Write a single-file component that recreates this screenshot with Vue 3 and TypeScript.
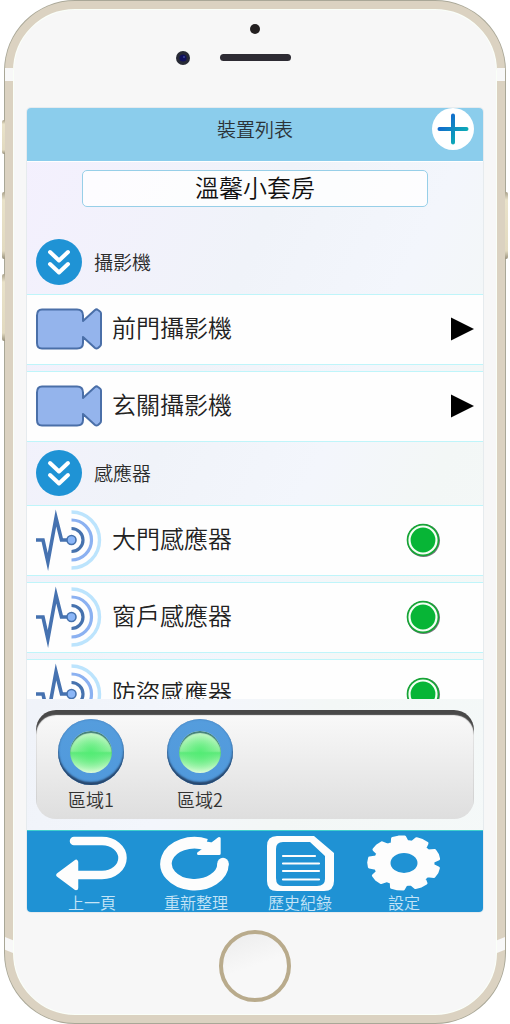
<script setup lang="ts">
import { ref } from 'vue'

interface Item {
  id: string
  name: string
}

const homeName = ref('溫馨小套房')
const camerasOpen = ref(true)
const sensorsOpen = ref(true)

const cameras: Item[] = [
  { id: 'front', name: '前門攝影機' },
  { id: 'hall', name: '玄關攝影機' },
]
const sensors: Item[] = [
  { id: 'door', name: '大門感應器' },
  { id: 'window', name: '窗戶感應器' },
  { id: 'burglar', name: '防盜感應器' },
]
const zones = ref([
  { id: 1, name: '區域1', on: true },
  { id: 2, name: '區域2', on: true },
])

// Outline of a nine-toothed gear on an ellipse
function gearPath(cx: number, cy: number, rx: number, ry: number): string {
  const teeth = 9
  const profile: [number, number][] = [
    [-15, 0.83],
    [-10, 1],
    [0, 1.01],
    [10, 1],
    [15, 0.83],
  ]
  const points: string[] = []
  for (let i = 0; i < teeth; i++) {
    for (const [offset, r] of profile) {
      const a = ((-99 + i * 40 + offset) * Math.PI) / 180
      points.push(`${(cx + rx * r * Math.cos(a)).toFixed(1)} ${(cy + ry * r * Math.sin(a)).toFixed(1)}`)
    }
  }
  return `M${points.join('L')}Z`
}
const gear = gearPath(37, 28, 35, 26)
</script>

<template>
  <div class="page">
    <div class="phone">
      <span class="side mute"></span>
      <span class="side up"></span>
      <span class="side down"></span>
      <span class="side power"></span>
      <span class="band top-left"></span>
      <span class="band top-right"></span>
      <span class="band bottom-left"></span>
      <span class="band bottom-right"></span>

      <div class="bezel">
        <svg width="160" height="99" viewBox="0 0 160 99" aria-hidden="true">
          <circle cx="80" cy="20" r="5" fill="#231f20" />
          <circle cx="8" cy="49" r="7" fill="#272a35" />
          <circle cx="8" cy="49" r="3.6" fill="#10105c" />
          <circle cx="9" cy="48" r="1" fill="#3b4a9a" />
          <rect x="45" y="45" width="71" height="7" rx="3.5" fill="#2d2b33" />
        </svg>
      </div>

      <main class="screen">
        <header class="bar">
          <h1>裝置列表</h1>
          <button class="add" type="button" aria-label="新增裝置">
            <svg width="42" height="42" viewBox="0 0 42 42">
              <defs>
                <linearGradient id="plus" gradientUnits="userSpaceOnUse" x1="8" y1="10" x2="34" y2="32">
                  <stop offset="0.1" stop-color="#1263cf" />
                  <stop offset="0.9" stop-color="#0cb2b4" />
                </linearGradient>
              </defs>
              <path d="M21 7.500V34.500M7.500 21H34.500" stroke="url(#plus)" stroke-width="4" stroke-linecap="round" />
            </svg>
          </button>
        </header>

        <div class="name">
          <input v-model="homeName" type="text" aria-label="名稱" />
        </div>

        <div class="list">
          <section>
            <div class="head">
              <button class="fold" type="button" aria-labelledby="cam-title" :aria-expanded="camerasOpen" @click="camerasOpen = !camerasOpen">
                <svg width="46" height="46" viewBox="0 0 46 46">
                  <path d="M14 13L23 21.500L32 13M14 25L23 33.500L32 25" />
                </svg>
              </button>
              <h2 id="cam-title">攝影機</h2>
            </div>
            <ul v-if="camerasOpen">
              <li v-for="c in cameras" :key="c.id">
                <svg width="66" height="42" viewBox="0 0 66 42" fill="#94b4ec" stroke="#4a6fa8" stroke-width="2" stroke-linejoin="round" aria-hidden="true">
                  <path d="M6 1.500H41Q47 1.500 47 7.500V13L59 2Q60.500 0.800 62 2L64 3.500Q65 4.200 65 5.500V36Q65 37.500 64 38.200L62 40Q60.500 41 59 40L47 29V35Q47 40.500 41 40.500H6Q1 40.500 1 35V7.500Q1 1.500 6 1.500Z" />
                </svg>
                <span class="label">{{ c.name }}</span>
                <button class="play" type="button" :aria-label="c.name">
                  <svg width="23" height="24" viewBox="0 0 23 24"><path d="M0 0.500L23 12L0 23.500Z" /></svg>
                </button>
              </li>
            </ul>
          </section>

          <section>
            <div class="head">
              <button class="fold" type="button" aria-labelledby="sen-title" :aria-expanded="sensorsOpen" @click="sensorsOpen = !sensorsOpen">
                <svg width="46" height="46" viewBox="0 0 46 46">
                  <path d="M14 13L23 21.500L32 13M14 25L23 33.500L32 25" />
                </svg>
              </button>
              <h2 id="sen-title">感應器</h2>
            </div>
            <ul v-if="sensorsOpen">
              <li v-for="s in sensors" :key="s.id">
                <svg width="66" height="62" viewBox="0 0 66 62" fill="none" aria-hidden="true">
                  <path d="M35.500 3A28 28 0 0 1 35.500 59" stroke="#bce4fd" stroke-width="3.400" />
                  <path d="M35.500 11A20 20 0 0 1 35.500 51" stroke="#8bb1f1" stroke-width="3.200" />
                  <path d="M35.500 19.500A11.500 11.500 0 0 1 35.500 42.500" stroke="#4672ae" stroke-width="3.200" />
                  <path d="M0 31H7L11.900 53L20 9L25.500 31H31" stroke="#4672b0" stroke-width="3.600" stroke-miterlimit="10" />
                  <circle cx="35.500" cy="31" r="4.500" fill="#8bb6f7" stroke="#4672ae" stroke-width="1.600" />
                </svg>
                <span class="label">{{ s.name }}</span>
                <svg class="status" width="36" height="36" viewBox="0 0 36 36" role="img" aria-label="正常">
                  <circle cx="18.500" cy="18.500" r="16.500" fill="#7f7484" />
                  <circle cx="18" cy="18" r="16.300" fill="#16a536" />
                  <circle cx="18" cy="18" r="13.500" fill="#07b536" stroke="#f4fff4" stroke-width="2.200" />
                </svg>
              </li>
            </ul>
          </section>
        </div>

        <div class="zones">
          <div class="panel">
            <div v-for="z in zones" :key="z.id" class="zone">
              <button type="button" :aria-labelledby="'zone' + z.id" :aria-pressed="z.on" @click="z.on = !z.on">
                <span class="lamp" :class="{ off: !z.on }"></span>
              </button>
              <span :id="'zone' + z.id">{{ z.name }}</span>
            </div>
          </div>
        </div>

        <nav class="tabs">
          <button type="button">
            <svg width="72" height="57" viewBox="0 0 72 57">
              <path d="M18 6H46A20.500 17 0 0 1 46 40H20" fill="none" stroke="#fdfdfd" stroke-width="8.500" stroke-linecap="round" />
              <path d="M2.500 40L20 27V53Z" fill="#fdfdfd" stroke="#fdfdfd" stroke-width="4.500" stroke-linejoin="round" />
            </svg>
            <span>上一頁</span>
          </button>
          <button type="button">
            <svg width="72" height="57" viewBox="0 0 72 57">
              <path d="M63 28.500A28.500 21 0 1 1 46 9.500" fill="none" stroke="#fdfdfd" stroke-width="11.500" />
              <circle cx="63" cy="28.500" r="5.700" fill="#fdfdfd" />
              <path d="M59.200 3.500V18.500H38.500L46 13V8L52 9Z" fill="#fdfdfd" stroke="#fdfdfd" stroke-width="3" stroke-linejoin="round" />
            </svg>
            <span>重新整理</span>
          </button>
          <button type="button">
            <svg width="68" height="57" viewBox="0 0 68 57">
              <path fill="#fdfdfd" fill-rule="evenodd" d="M11 1H48L68 18V46Q68 56 58 56H11Q1 56 1 46V11Q1 1 11 1ZM17 7Q10 7 10 14V43Q10 51 17 51H51Q59 51 59 44V21L44 7Z" />
              <path d="M17 21H49M17 28.500H53M17 36H53M17 44.500H53" stroke="#fdfdfd" stroke-width="2.200" stroke-linecap="round" />
            </svg>
            <span>歷史紀錄</span>
          </button>
          <button type="button">
            <svg width="74" height="57" viewBox="0 0 74 57">
              <path :d="gear" fill="#fdfdfd" stroke="#fdfdfd" stroke-width="3" stroke-linejoin="round" />
              <ellipse cx="37" cy="28" rx="13.500" ry="10" fill="#1f92d4" />
            </svg>
            <span>設定</span>
          </button>
        </nav>
      </main>

      <div class="chin">
        <button class="home" type="button" aria-label="主畫面"></button>
      </div>
    </div>
  </div>
</template>

<style>
body {
  background: #fff;
}
</style>

<style scoped>
* {
  box-sizing: border-box;
}
.page {
  display: flex;
  height: 100vh;
  min-height: 700px;
  padding: 1px 5px;
  font-family: "Noto Sans CJK TC", "Noto Sans", sans-serif;
  font-weight: 350;
  color: #222;
}
button {
  padding: 0;
  border: 0;
  background: none;
  font: inherit;
  color: inherit;
  cursor: pointer;
}
svg {
  display: block;
  flex: none;
}
h1,
h2,
ul {
  margin: 0;
  padding: 0;
}
.phone {
  position: relative;
  flex: 1;
  min-width: 0;
  display: flex;
  flex-direction: column;
  padding: 0 14px;
  border: 8px solid #dbd2c1;
  border-radius: 70px;
  background: #f7f7f7;
  box-shadow: inset 0 0 0 1px #fafff8, 0 0 0 1px #a9a797;
}
.side {
  position: absolute;
  left: -11px;
  width: 3px;
  border-radius: 2px 0 0 2px;
  background: linear-gradient(#aaa28c, #e9e2c9 12%, #e2dac0 88%, #99927d);
}
.mute {
  top: 111px;
  height: 34px;
}
.up {
  top: 183px;
  height: 67px;
}
.down {
  top: 265px;
  height: 67px;
}
.power {
  left: auto;
  right: -11px;
  top: 183px;
  height: 67px;
  border-radius: 0 2px 2px 0;
}
.band {
  position: absolute;
  width: 8px;
  height: 13px;
  background: #f8f8f8;
}
.top-left {
  top: 59px;
  left: -8px;
}
.top-right {
  top: 59px;
  right: -8px;
}
.bottom-left {
  bottom: 62px;
  left: -8px;
  height: 16px;
  clip-path: polygon(0 0, 100% 20%, 100% 100%, 0 80%);
}
.bottom-right {
  bottom: 62px;
  right: -8px;
  height: 16px;
  clip-path: polygon(0 20%, 100% 0, 100% 80%, 0 100%);
}
.bezel {
  display: flex;
  justify-content: center;
}
.screen {
  flex: 1;
  min-height: 0;
  display: flex;
  flex-direction: column;
  overflow: hidden;
  border-radius: 4px;
  background: linear-gradient(115deg, #f4f0fe, #f0f3f9 35%, #f3f6fc 55%, #f3f7f6 70%, #f5f9f9);
  box-shadow: 0 0 0 1px #e6ebee;
}
.bar {
  flex: none;
  display: grid;
  grid-template-columns: 1fr auto 1fr;
  align-items: start;
  height: 54px;
  padding: 0 9px;
  border-bottom: 1px solid #fff;
  background: #8bcdec;
}
h1 {
  grid-column: 2;
  font-size: 19px;
  font-weight: 350;
  line-height: 42px;
  color: #2b3338;
}
.add {
  justify-self: end;
  border-radius: 50%;
  background: #fff;
}
.name {
  flex: none;
  display: flex;
  padding: 8px 55px 24px;
}
.name input {
  flex: 1;
  min-width: 0;
  height: 37px;
  padding: 0 0 4px;
  border: 1px solid #97cfe8;
  border-radius: 5px;
  background: rgba(255, 255, 255, 0.8);
  font: inherit;
  font-size: 24px;
  line-height: 32px;
  text-align: center;
  color: #111;
}
.list {
  flex: 1;
  min-height: 0;
  overflow: hidden;
}
.head {
  display: flex;
  align-items: center;
  gap: 12px;
  height: 63px;
  padding: 0 9px 2px;
}
.fold {
  border-radius: 50%;
  background: #1f93d5;
}
.fold path {
  fill: none;
  stroke: #fff;
  stroke-width: 4;
  stroke-linecap: round;
  stroke-linejoin: round;
}
h2 {
  font-size: 19px;
  font-weight: 350;
  line-height: 28px;
  color: #2b2b2b;
}
ul {
  display: flex;
  flex-direction: column;
  gap: 6px;
  list-style: none;
}
li {
  display: flex;
  align-items: center;
  gap: 10px;
  height: 71px;
  padding: 0 9px 2px;
  border: solid #bff5fa;
  border-width: 1px 0;
  background: #fefefe;
}
.label {
  flex: 1;
  padding-bottom: 3px;
  font-size: 24px;
  line-height: 36px;
  white-space: nowrap;
}
.status {
  margin-right: 33px;
}
.zones {
  flex: none;
  padding: 11px 9px;
}
.panel {
  display: flex;
  gap: 43px;
  height: 109px;
  padding: 9px 22px 0;
  border-radius: 20px;
  background: linear-gradient(#fafafa, #dedede);
  box-shadow: inset 0 5px 1px #494949;
}
.zone {
  display: flex;
  flex-direction: column;
  align-items: center;
  width: 66px;
  font-size: 18px;
  line-height: 28px;
  white-space: nowrap;
  color: #333;
}
.zone button {
  display: flex;
  flex: none;
  padding: 12px;
  border-radius: 50%;
  background: linear-gradient(#559ddd, #5099dc);
  box-shadow: inset 0 -3px 2px #27466c, inset 0 0 2px #3c75b0;
}
.lamp {
  width: 42px;
  height: 42px;
  border-radius: 50%;
  background: radial-gradient(circle at 50% 50%, rgba(82, 236, 116, 0.9), rgba(82, 236, 116, 0) 70%), linear-gradient(#dcfbd9, #8cf09b 48%, #5eea7b 52%, #defcd9);
  box-shadow: inset 0 2px 1px #407d77;
}
.lamp.off {
  background: #d8dcd8;
}
.tabs {
  flex: none;
  display: grid;
  grid-template-columns: repeat(4, 1fr);
  height: 82px;
  padding: 4px 27px 0 13px;
  border-top: 1px solid #3fd0cc;
  background: #1f92d4;
}
.tabs button {
  display: flex;
  flex-direction: column;
  align-items: center;
  font-size: 16px;
  line-height: 20px;
  white-space: nowrap;
  color: #c4e4f7;
}
.chin {
  display: flex;
  justify-content: center;
  padding: 18px 0 13px;
}
.home {
  width: 72px;
  height: 72px;
  border: 4px solid #b9ab8c;
  border-radius: 50%;
  background: linear-gradient(160deg, #ececec, #f8f8f8 50%);
}
</style>
